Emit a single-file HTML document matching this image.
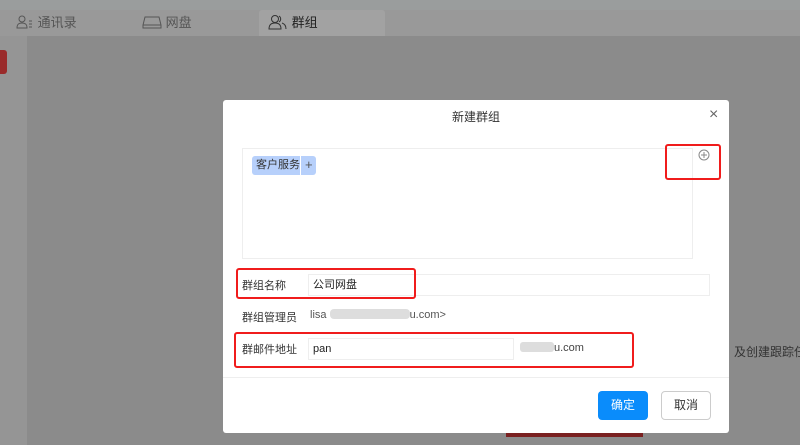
<!DOCTYPE html>
<html><head><meta charset="utf-8"><style>
*{margin:0;padding:0;box-sizing:border-box}
body{width:800px;height:445px;overflow:hidden;background:#8b8b8b;font-family:"Liberation Sans","Noto Sans CJK SC",sans-serif;position:relative;font-size:12px;color:#333}
.top{position:absolute;left:0;top:0;width:800px;height:10px;background:#9a9d9d}
.tabs{position:absolute;left:0;top:10px;width:800px;height:26px;background:#999}
.tab{position:absolute;top:0;height:26px;line-height:25px;font-size:13px;color:#555;white-space:nowrap}
.side{position:absolute;left:0;top:36px;width:27px;height:409px;background:#959595}
.red{position:absolute;left:0;top:50px;width:7px;height:24px;background:#9a2b2b;border-radius:0 3px 3px 0}
.modal{position:absolute;left:223px;top:100px;width:506px;height:333px;background:#fff;border-radius:3px}
.rb{position:absolute;border:2px solid #f01c1c;border-radius:3px}
.lbl{position:absolute;font-size:11px;color:#333;white-space:nowrap}
.inp{position:absolute;border:1px solid #eee;height:22px;font-size:11px;line-height:20px;padding-left:4px;color:#222}
</style></head><body>
<div class="top"></div>
<div class="tabs">
<div style="position:absolute;left:259px;top:0;width:126px;height:26px;background:#a2a2a2;border-radius:3px 3px 0 0"></div>
<div class="tab" style="left:16px"><svg width="18" height="14" style="vertical-align:-2px" fill="none" stroke="#555" stroke-width="1"><circle cx="6" cy="4" r="3"/><path d="M1 13c0-4 2-5 5-5s5 1 5 5z"/><path d="M13 6h3M13 9h3M13 12h3"/></svg> 通讯录</div>
<div class="tab" style="left:142px"><svg width="20" height="14" style="vertical-align:-2px" fill="none" stroke="#555" stroke-width="1"><path d="M3 2h14l2 8v3H1v-3z"/><path d="M1 10h18"/></svg> 网盘</div>
<div class="tab" style="left:268px;color:#222"><svg width="20" height="16" style="vertical-align:-3px" fill="none" stroke="#333" stroke-width="1"><circle cx="7" cy="5" r="3.5"/><path d="M1 15c0-4 2-6 6-6s6 2 6 6z"/><path d="M11 2a3.5 3.5 0 0 1 0 6M14 9c3 1 4 3 4 6"/></svg> 群组</div>
</div>
<div class="side"></div><div class="red"></div>
<div style="position:absolute;left:734px;top:343px;font-size:12px;color:#333;white-space:nowrap">及创建跟踪任</div>
<div style="position:absolute;left:506px;top:433px;width:137px;height:4px;background:#7a2020"></div>
<div class="modal">
<div style="position:absolute;left:0;top:8px;width:100%;text-align:center;font-size:12px;color:#333">新建群组</div>
<div style="position:absolute;left:486px;top:6px;font-size:16px;color:#666">×</div>
<div style="position:absolute;left:19px;top:48px;width:451px;height:111px;border:1px solid #eee"></div>
<div style="position:absolute;left:29px;top:56px;height:19px;width:64px;background:#b7d0fb;border-radius:3px;font-size:11px;line-height:19px;color:#333;white-space:nowrap"><span style="position:absolute;left:4px">客户服务</span><span style="position:absolute;left:48px;top:0;width:1px;height:19px;background:#fff"></span><span style="position:absolute;left:53px;top:-1px;font-size:13px;color:#555">+</span></div>
<svg style="position:absolute;left:475px;top:49px" width="12" height="12" fill="none" stroke="#888"><circle cx="6" cy="6" r="5"/><path d="M6 3v6M3 6h6"/></svg>
<div class="rb" style="left:442px;top:44px;width:56px;height:36px"></div>
<div class="inp" style="left:85px;top:174px;width:402px">公司网盘</div>
<div class="lbl" style="left:19px;top:177px">群组名称</div>
<div class="rb" style="left:13px;top:168px;width:180px;height:31px"></div>
<div class="lbl" style="left:19px;top:209px">群组管理员</div>
<div style="position:absolute;left:87px;top:209px;font-size:11px;color:#555;white-space:nowrap">lisa <span style="display:inline-block;width:80px;height:10px;background:#ddd;vertical-align:-1px;border-radius:4px"></span>u.com&gt;</div>
<div class="inp" style="left:85px;top:238px;width:206px">pan</div>
<div style="position:absolute;left:297px;top:242px;font-size:11px;color:#444;white-space:nowrap"><span style="display:inline-block;width:34px;height:10px;background:#ddd;vertical-align:-1px;border-radius:3px"></span>u.com</div>
<div class="lbl" style="left:19px;top:241px">群邮件地址</div>
<div class="rb" style="left:11px;top:232px;width:400px;height:36px"></div>
<div style="position:absolute;left:0;top:277px;width:100%;height:1px;background:#eee"></div>
<div style="position:absolute;left:375px;top:291px;width:50px;height:29px;background:#0a8cfb;border-radius:4px;color:#fff;text-align:center;line-height:29px;font-size:12px">确定</div>
<div style="position:absolute;left:438px;top:291px;width:50px;height:29px;border:1px solid #ccc;border-radius:4px;text-align:center;line-height:27px;font-size:12px;color:#333">取消</div>
</div>
</body></html>
